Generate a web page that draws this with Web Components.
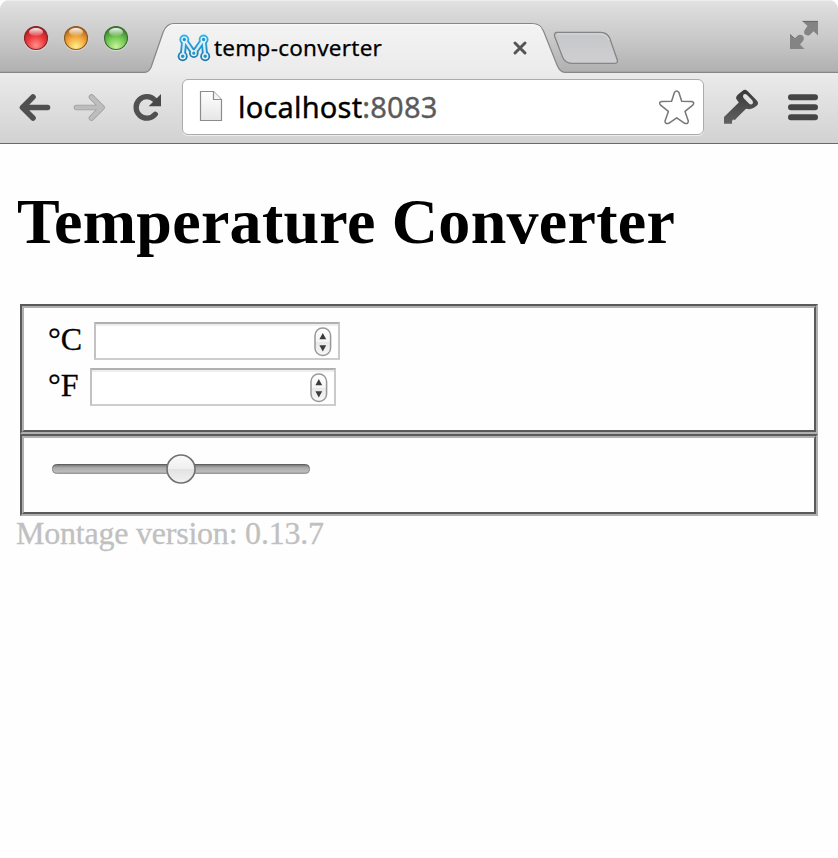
<!DOCTYPE html>
<html lang="en"><head><meta charset="utf-8"><title>temp-converter</title>
<style>html,body{margin:0;background:#fff;height:100%}</style></head>
<body>
<browser-window>
  <tab-strip slot="chrome"><span>temp-converter</span></tab-strip>
  <tool-bar slot="chrome"><span slot="host">localhost</span><span slot="port">:8083</span></tool-bar>
  <temp-converter></temp-converter>
</browser-window>
<script>
function define(name, css, html){
  const t=document.createElement('template');
  t.innerHTML='<style>*{box-sizing:border-box}svg{display:block;flex:none}'+css+'</style>'+html;
  customElements.define(name,class extends HTMLElement{
    constructor(){super();this.attachShadow({mode:'open'}).append(t.content.cloneNode(true));}
  });
}
define('browser-window',
':host{display:flex;flex-direction:column;width:838px;height:858px;overflow:hidden;background:#fefefe}',
'<slot name="chrome"></slot><slot></slot>');

define('traffic-lights',':host{display:block;width:104px;height:26px}',
`<svg width="104" height="26" viewBox="24 25 104 26"><defs>
<radialGradient id="r" cx=".5" cy=".82" r=".8"><stop offset="0" stop-color="#ff9088"/><stop offset=".5" stop-color="#ee3a40"/><stop offset="1" stop-color="#a5181c"/></radialGradient>
<radialGradient id="y" cx=".5" cy=".88" r=".85"><stop offset="0" stop-color="#fff08c"/><stop offset=".5" stop-color="#f3a83c"/><stop offset="1" stop-color="#a85f14"/></radialGradient>
<radialGradient id="g" cx=".5" cy=".88" r=".85"><stop offset="0" stop-color="#c8f59a"/><stop offset=".5" stop-color="#74c854"/><stop offset="1" stop-color="#327a28"/></radialGradient>
<linearGradient id="h" x2="0" y2="1"><stop offset="0" stop-color="#fff" stop-opacity=".95"/><stop offset="1" stop-color="#fff" stop-opacity=".1"/></linearGradient></defs>
<g fill="none" stroke="#fff" stroke-opacity=".45"><circle cx="36" cy="38.8" r="12"/><circle cx="76" cy="38.8" r="12"/><circle cx="116" cy="38.8" r="12"/></g>
<g stroke-width="1.2"><circle cx="36" cy="38" r="11.5" fill="url(#r)" stroke="#7d2a2a"/><circle cx="76" cy="38" r="11.5" fill="url(#y)" stroke="#8a5a28"/><circle cx="116" cy="38" r="11.5" fill="url(#g)" stroke="#3f6d34"/></g>
<g fill="url(#h)"><ellipse cx="36" cy="32" rx="7" ry="4"/><ellipse cx="76" cy="32" rx="7" ry="4"/><ellipse cx="116" cy="32" rx="7" ry="4"/></g></svg>`);

define('montage-logo',':host{display:block;width:34px;height:28px}',
`<svg width="34" height="28" viewBox="177 34 34 28"><defs><linearGradient id="b" gradientUnits="userSpaceOnUse" x1="0" y1="35" x2="0" y2="61"><stop offset="0" stop-color="#35b6ee"/><stop offset="1" stop-color="#1b76a8"/></linearGradient></defs>
<g fill="none" stroke-linejoin="round"><g stroke="url(#b)" fill="url(#b)"><path fill="none" stroke-width="6" d="M182.700 56.300L184.300 39.500L193.800 53.300L203.600 39.500L205.200 56.300"/><circle cx="184.300" cy="39.500" r="4.900" stroke="none"/><circle cx="203.600" cy="39.500" r="4.900" stroke="none"/><circle cx="182.700" cy="56.200" r="5" stroke="none"/><circle cx="205.200" cy="56.200" r="5" stroke="none"/><circle cx="193.800" cy="53.200" r="4.800" stroke="none"/></g>
<path stroke="#d9eef8" stroke-width="2.300" d="M182.700 56.300L184.300 39.500L193.800 53.300L203.600 39.500L205.200 56.300"/>
<g fill="#2494ca" stroke="#e6f2f8" stroke-width="1.400"><circle cx="184.300" cy="39.500" r="2.400"/><circle cx="203.600" cy="39.500" r="2.400"/><circle cx="182.700" cy="56.200" r="2.500"/><circle cx="205.200" cy="56.200" r="2.500"/><circle cx="193.800" cy="53.200" r="2.300"/></g></g></svg>`);

define('tab-strip',`
:host{display:grid;height:72px;flex:none;background:linear-gradient(#e2e2e2 0,#d8d8d8 14px,#c8c8c8 40px,#b0b0b0 72px);border-radius:9px 9px 0 0;position:relative;z-index:1}
.shape,.row{grid-area:1/1}.shape{height:73px}.row{display:flex;padding-left:24px;align-items:flex-start}
traffic-lights{margin-top:25px}
.tab{display:flex;align-items:center;height:28px;margin:34px 0 0 49px;width:352px}
.label{font:22.5px/28px "Noto Sans","Open Sans",sans-serif;letter-spacing:.24px;-webkit-text-stroke:.25px;color:#000;margin-left:3px;flex:1;white-space:nowrap}
.full{margin:19px 18px 0 auto}`,
`<svg class="shape" width="838" height="73" viewBox="0 0 838 73"><defs><linearGradient id="t" x2="0" y2="1"><stop offset="0" stop-color="#f3f3f3"/><stop offset="1" stop-color="#ebebeb"/></linearGradient><linearGradient id="n" x2="0" y2="1"><stop offset="0" stop-color="#c6c7ca"/><stop offset="1" stop-color="#cfcfd1"/></linearGradient></defs>
<path d="M7 .5H831" stroke="#eee" stroke-width="1"/>
<path d="M-2 72.400H144Q148.500 72.400 151 67.500L163 32.500Q166.500 23.500 174 23.500H532Q540.500 23.500 543.500 31L557 65Q560 72.400 565 72.400H840V76H-2Z" fill="url(#t)" stroke="#868686" stroke-width="1.2"/>
<path d="M166.500 29Q169 24.800 174 24.800H532Q538 24.800 541 28" fill="none" stroke="#fafafa"/>
<path d="M557 32.500H601Q607.500 32.500 610 39L617.300 60Q618 63.300 615 63.300H572Q565 63.300 562.500 57L554.700 36.500Q553.700 32.500 557 32.500Z" fill="url(#n)" stroke="#858585" stroke-width="1.3"/>
<path d="M557 33.900H601Q606.500 33.900 609 40" fill="none" stroke="#e0e0e0"/></svg>
<div class="row"><traffic-lights></traffic-lights><div class="tab"><montage-logo></montage-logo><div class="label"><slot></slot></div>
<svg width="18" height="18" viewBox="0 0 18 18"><path d="M4 4L14 14M14 4L4 14" stroke="#555" stroke-width="3" stroke-linecap="round"/></svg></div>
<svg class="full" width="31" height="32" viewBox="789 19 31 32"><path d="M802.500 21.300H818V35.500L813.500 31.200L809.500 35.300Q806 36 804.500 34Q803.500 31.500 805 29.500L807.500 26Z" fill="#848484"/><path d="M790 34.500L794.500 38.500L798.500 35Q802 34 803.500 36.500Q804.500 39 803 41L800 44.500L804.500 49H790Z" fill="#848484"/><path d="M802.500 21.400H818M790 34.500L794.500 38.500" stroke="#666" fill="none"/></svg></div>`);

define('tool-bar',`
:host{display:flex;align-items:center;height:72px;box-sizing:border-box;flex:none;background:linear-gradient(#ebebeb,#d2d2d2);border-bottom:1px solid #6a6a6a;padding-left:17px}
.fwd{margin-left:18px}.rel{margin:0 19px 0 24px}
.url{display:flex;align-items:center;width:522px;height:56px;margin-top:-1px;background:#fff;border:1.500px solid #acacac;border-radius:6px;padding:0 7px 0 15px;box-shadow:0 1px 0 #ededed}
.text{flex:1;margin-left:14px;font:29px/40px "Noto Sans","Open Sans",sans-serif;letter-spacing:.2px;-webkit-text-stroke:.35px;color:#000;white-space:nowrap}.text ::slotted([slot=port]){color:#5a5a5a}
.key{margin-left:16px}.menu{margin-left:24px}`,
`<svg width="36" height="31" viewBox="18 92 36 31"><path d="M34 97L23.500 107.500L34 118M24.500 107.500H48.500" fill="none" stroke="#505050" stroke-width="5.600" stroke-linecap="round" stroke-linejoin="round"/></svg>
<svg class="fwd" width="36" height="31" viewBox="72 92 36 31"><g fill="none" stroke-linecap="round" stroke-linejoin="round"><path d="M92.500 97L103 107.500L92.500 118M102 107.500H77.500" stroke="#a0a0a0" stroke-width="5.600"/><path d="M92.500 97L103 107.500L92.500 118M102 107.500H77.500" stroke="#bdbdbd" stroke-width="4"/></g></svg>
<svg class="rel" width="32" height="31" viewBox="131 92 32 31"><path d="M155.300 114.200A10.800 10.800 0 1 1 154.800 100" fill="none" stroke="#505050" stroke-width="5.300" stroke-linecap="round"/><path d="M161 94V106.200H148.700Z" fill="#484848"/></svg>
<div class="url"><svg width="26" height="34" viewBox="198 91 26 34"><defs><linearGradient id="p" x2="0" y2="1"><stop offset="0" stop-color="#fff"/><stop offset="1" stop-color="#e6e6e8"/></linearGradient></defs><path d="M200.500 92.500H213.500L221.500 100.500V121.500H200.500Z" fill="url(#p)" stroke="#8c8c8c" stroke-width="1.200"/><path d="M213.500 92.500V100.500H221.500" fill="#f4f4f4" stroke="#8c8c8c" stroke-width="1.200"/></svg>
<div class="text"><slot name="host"></slot><slot name="port"></slot></div>
<svg width="38" height="37" viewBox="657 88 38 37"><path d="M673.400 91.500Q675.600 88.300 677.900 91.500L680.700 100.300L690.700 100.400Q694.200 101.300 691.700 104.200L684 110.400L687.300 120Q687.300 123.400 683.700 122.300L675.700 116.800L667.700 122.300Q664 123.400 664 120L667.400 110.400L659.600 104.200Q657.200 101.300 660.600 100.400L670.600 100.300Z" fill="#fff" stroke="#777" stroke-width="1.500" stroke-linejoin="round"/></svg></div>
<svg class="key" width="42" height="37" viewBox="720 89 42 37"><defs><linearGradient id="e" x2="0" y2="1"><stop offset="0" stop-color="#383838"/><stop offset="1" stop-color="#626262"/></linearGradient></defs><path fill-rule="evenodd" d="M743 90.500Q745 89 747.500 91L757 100.800Q759 103.500 757 105.500Q753.500 109 749.500 109.200L746 108.800L736.500 118.200L735 120L733 119.500L732 121.300L732 123.800H724V117L738.800 102.500L736 98.500Q736 96 738 94.500ZM743.300 94.800Q742.500 97 744 98.500L749.500 104Q751.500 105 752.800 103.500Q753.500 101.500 752 100L746.800 94.800Q745 93.400 743.300 94.800Z" fill="url(#e)"/></svg>
<svg class="menu" width="34" height="31" viewBox="786 92 34 31"><path d="M791 97.200H815M791 107.200H815M791 117.200H815" stroke="#454545" stroke-width="6" stroke-linecap="round"/></svg>`);

define('groove-box',`
:host{display:block;box-sizing:border-box;border:2px solid;border-color:#5a5a5a #b0b0b0 #b0b0b0 #5a5a5a}
div{height:100%;border:2px solid;border-color:#b0b0b0 #5a5a5a #5a5a5a #b0b0b0;padding:var(--pad)}`,'<div><slot></slot></div>');

define('number-field',`
:host{display:flex;align-items:flex-start;height:46px;font:32px/34px "Liberation Serif",serif;color:#000}
.label{-webkit-text-stroke:.3px}
.box{display:flex;justify-content:flex-end;margin-left:11.600px;width:246px;height:38px;border:2px solid;border-color:#b0b0b0 #cacaca #cdcdcd #c2c2c2;padding:3px 5px 0;box-shadow:inset 0 2px 1px #eee;background:#fff}`,
`<span class="label"><slot></slot></span><div class="box"><svg width="20" height="30" viewBox="0 0 20 30"><defs><linearGradient id="s" x2="0" y2="1"><stop offset="0" stop-color="#fff"/><stop offset=".5" stop-color="#f5f5f5"/><stop offset=".51" stop-color="#e8e8e8"/><stop offset="1" stop-color="#f8f8f8"/></linearGradient></defs><rect x="2" y="1" width="15.600" height="27.500" rx="7.500" fill="url(#s)" stroke="#999" stroke-width="1.500"/><path d="M9.800 6L13.200 12.300H6.400ZM9.800 24.500L13.200 18.200H6.400Z" fill="#3c3c3c"/></svg></div>`);

define('range-slider',':host{display:block}',
`<svg width="260" height="34" viewBox="51 452 260 34"><defs><linearGradient id="a" x2="0" y2="1"><stop offset="0" stop-color="#707070"/><stop offset=".35" stop-color="#aaa"/><stop offset=".8" stop-color="#bcbcbc"/><stop offset="1" stop-color="#999"/></linearGradient><linearGradient id="c" x2="0" y2="1"><stop offset="0" stop-color="#fafafa"/><stop offset=".5" stop-color="#efefef"/><stop offset=".51" stop-color="#e2e2e2"/><stop offset="1" stop-color="#f2f2f2"/></linearGradient><linearGradient id="d" x2="0" y2="1"><stop offset="0" stop-color="#606060"/><stop offset="1" stop-color="#9a9a9a"/></linearGradient></defs>
<rect x="52.500" y="464.500" width="257" height="9" rx="4" fill="url(#a)" stroke="url(#d)"/><circle cx="181" cy="469" r="14" fill="url(#c)" stroke="#707070" stroke-width="1.600"/></svg>`);

define('temp-converter',`
:host{display:block;padding:41px 20px 0;font-family:"Liberation Serif",serif}
h1{margin:0 0 0 -3px;height:119px;font:bold 64px/74px "Liberation Serif",serif;letter-spacing:.28px;color:#000;white-space:nowrap}
.a{height:130px;--pad:14px 24px 0}.b{height:82px;--pad:14px 27px 0}
p{margin:0 0 0 -4px;font-size:32px;line-height:34px;letter-spacing:-.22px;-webkit-text-stroke:.3px;color:#c0c0c0}`,
`<h1>Temperature Converter</h1><groove-box class="a"><number-field>°C</number-field><number-field>°F</number-field></groove-box><groove-box class="b"><range-slider></range-slider></groove-box><p>Montage version: 0.13.7</p>`);
</script></body></html>
